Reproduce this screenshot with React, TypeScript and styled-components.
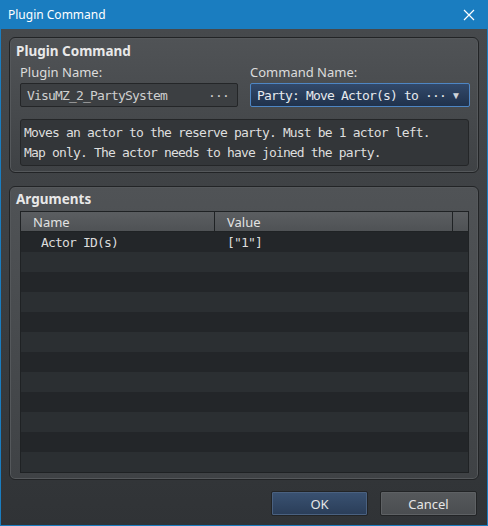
import styled, { createGlobalStyle } from "styled-components"

const GlobalStyle = createGlobalStyle`
  html, body {
    margin: 0;
    padding: 0;
    background: #1a7dc0;
  }
`

const UI_FONT = `"Noto Sans", "Open Sans", sans-serif`
const MONO_FONT = `"DejaVu Sans Mono", "Liberation Mono", monospace`

const Window = styled.div`
  width: 488px;
  height: 526px;
  box-sizing: border-box;
  display: flex;
  flex-direction: column;
  background: #1a7dc0;
  border: 1px solid #1a7dc0;
  border-top: none;
  font-family: ${UI_FONT};
`

const TitleBar = styled.div`
  flex: none;
  height: 29px;
  display: flex;
  align-items: center;
  justify-content: space-between;
  padding: 0 7px;
  color: #ffffff;
  font-size: 12px;
`

const CloseIcon = styled.svg`
  width: 12px;
  height: 12px;
  margin-right: 5px;
  stroke: #ffffff;
  stroke-width: 1.2;
`

const Body = styled.div`
  flex: 1;
  min-height: 0;
  display: flex;
  flex-direction: column;
  padding: 8px 8px 9px;
  background: linear-gradient(#46494c, #303336);
`

const Group = styled.section<{ $top: number; $bottom: number; $space?: number }>`
  flex: none;
  display: flex;
  flex-direction: column;
  margin-top: ${({ $space }) => $space ?? 0}px;
  padding: ${({ $top, $bottom }) => `${$top}px 9px ${$bottom}px 10px`};
  border: 1px solid #222426;
  border-radius: 6px;
  box-shadow: inset 0 0 0 1px #55585b;
  background: linear-gradient(#505356, #3f4245);
`

const GroupTitle = styled.div`
  color: #e8e8e8;
  font-size: 13.5px;
  font-weight: 700;
  line-height: 18px;
  margin-left: -4px;
`

const FieldRow = styled.div`
  display: grid;
  grid-template-columns: 218px 220px;
  column-gap: 12px;
  margin-top: 4px;
`

const Field = styled.div`
  display: flex;
  flex-direction: column;
  gap: 2px;
`

const Label = styled.div`
  color: #dcdcdc;
  font-size: 13px;
  line-height: 17px;
`

const Input = styled.div<{ $active?: boolean }>`
  height: 24px;
  box-sizing: border-box;
  display: flex;
  align-items: center;
  justify-content: space-between;
  padding: 0 8px 0 6px;
  border: 1px solid ${({ $active }) => ($active ? "#4e86c4" : "#242628")};
  border-radius: 2px;
  background: ${({ $active }) =>
    $active ? "linear-gradient(#32496a, #20324c)" : "#3c3f42"};
  color: ${({ $active }) => ($active ? "#e6e9ee" : "#cfcfcf")};
  font-family: ${MONO_FONT};
  font-size: 13px;
  letter-spacing: -0.83px;
  white-space: nowrap;
`

const Arrow = styled.span`
  font-family: ${UI_FONT};
  font-size: 10px;
  letter-spacing: 0;
  color: #d0d4da;
`

const Description = styled.div`
  margin-top: 12px;
  height: 47px;
  box-sizing: border-box;
  padding: 3px 3px;
  border: 1px solid #242628;
  border-radius: 3px;
  background: #333639;
  color: #dedede;
  font-family: ${MONO_FONT};
  font-size: 13px;
  letter-spacing: -0.83px;
  line-height: 20px;
  white-space: nowrap;
`

const Table = styled.div`
  margin-top: 3px;
  display: flex;
  flex-direction: column;
  border: 1px solid #1f2224;
  background: #232629;
`

const HeaderRow = styled.div`
  display: grid;
  grid-template-columns: 193px 1fr 16px;
  height: 19px;
  background: linear-gradient(#5b5e61, #4f5255);
  border-bottom: 1px solid #1f2224;
`

const HeaderCell = styled.div`
  display: flex;
  align-items: center;
  padding-left: 12px;
  color: #e2e2e2;
  font-size: 13px;
  & + & {
    border-left: 1px solid #1f2224;
  }
`

const Row = styled.div<{ $odd: boolean }>`
  display: grid;
  grid-template-columns: 193px 1fr;
  height: 20px;
  background: ${({ $odd }) => ($odd ? "#2b2f32" : "#232629")};
`

const Cell = styled.div<{ $indent: number }>`
  display: flex;
  align-items: center;
  padding-left: ${({ $indent }) => $indent}px;
  color: #dcdcdc;
  font-family: ${MONO_FONT};
  font-size: 13px;
  letter-spacing: -0.83px;
`

const Footer = styled.div`
  display: flex;
  justify-content: flex-end;
  gap: 12px;
  margin-top: 11px;
  padding-right: 2px;
`

const DialogButton = styled.button<{ $primary?: boolean }>`
  width: 97px;
  height: 25px;
  border: 1px solid #222426;
  border-radius: 2px;
  background: ${({ $primary }) =>
    $primary ? "linear-gradient(#3a5272, #2a3d58)" : "linear-gradient(#56595c, #4a4d50)"};
  box-shadow: inset 0 0 0 1px ${({ $primary }) => ($primary ? "#4a6180" : "#5e6164")};
  color: #e6e6e6;
  font-family: ${UI_FONT};
  font-size: 13px;
  padding: 0;
`

const rows = [{ name: "Actor ID(s)", value: '["1"]' }]

const App = () => {
  const lines = Array.from({ length: 12 }, (_, i) => rows[i] ?? { name: "", value: "" })

  return (
    <>
      <GlobalStyle />
      <Window>
        <TitleBar>
          <span>Plugin Command</span>
          <CloseIcon viewBox="0 0 12 12">
            <path d="M1 1L11 11M11 1L1 11" />
          </CloseIcon>
        </TitleBar>
        <Body>
          <Group $top={4} $bottom={6}>
            <GroupTitle>Plugin Command</GroupTitle>
            <FieldRow>
              <Field>
                <Label>Plugin Name:</Label>
                <Input>
                  <span>VisuMZ_2_PartySystem</span>
                  <span>···</span>
                </Input>
              </Field>
              <Field>
                <Label>Command Name:</Label>
                <Input $active>
                  <span>Party: Move Actor(s) to ···</span>
                  <Arrow>▼</Arrow>
                </Input>
              </Field>
            </FieldRow>
            <Description>
              Moves an actor to the reserve party. Must be 1 actor left.
              <br />
              Map only. The actor needs to have joined the party.
            </Description>
          </Group>
          <Group $top={3} $bottom={6} $space={13}>
            <GroupTitle>Arguments</GroupTitle>
            <Table>
              <HeaderRow>
                <HeaderCell>Name</HeaderCell>
                <HeaderCell>Value</HeaderCell>
                <HeaderCell />
              </HeaderRow>
              {lines.map((row, i) => (
                <Row key={i} $odd={i % 2 === 1}>
                  <Cell $indent={20}>{row.name}</Cell>
                  <Cell $indent={13}>{row.value}</Cell>
                </Row>
              ))}
            </Table>
          </Group>
          <Footer>
            <DialogButton $primary>OK</DialogButton>
            <DialogButton>Cancel</DialogButton>
          </Footer>
        </Body>
      </Window>
    </>
  )
}

export default App
